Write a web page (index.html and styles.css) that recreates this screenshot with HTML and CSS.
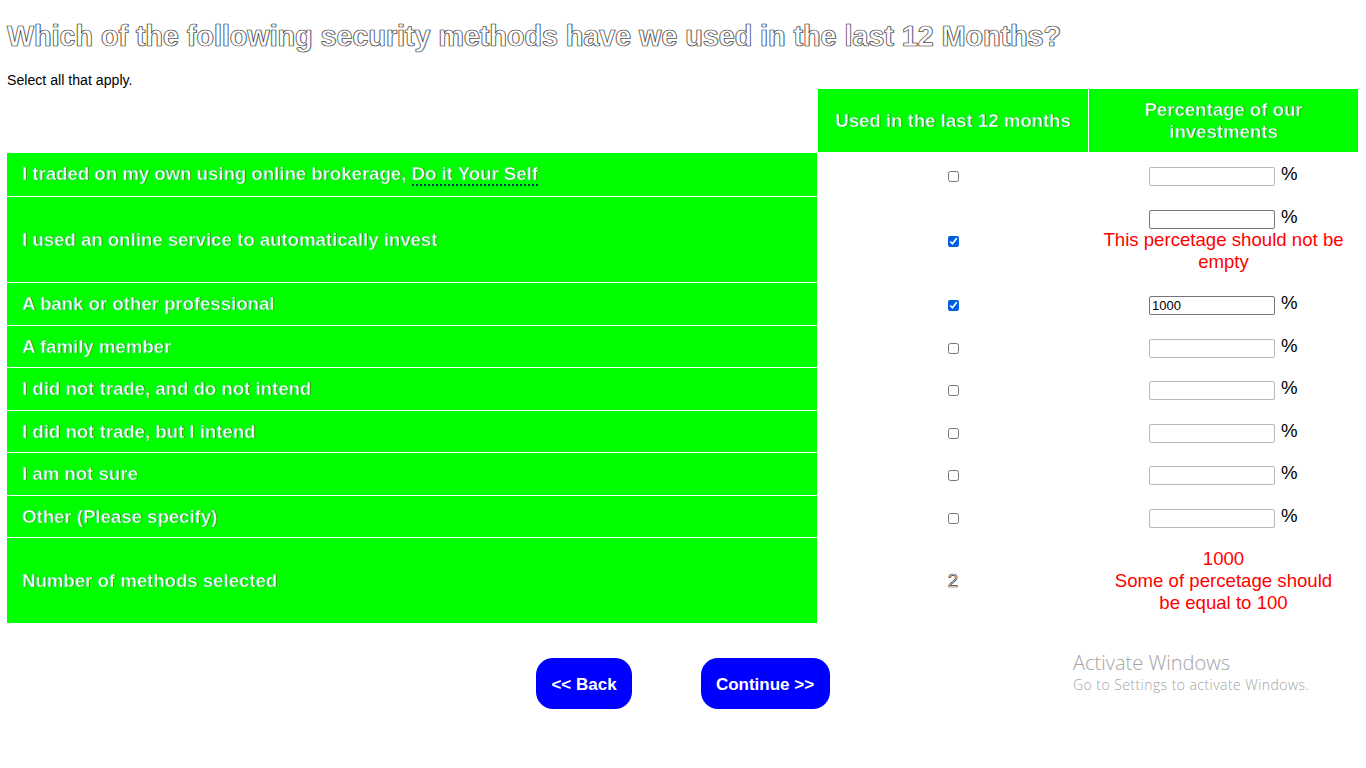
FILE: index.html
```html
<!DOCTYPE html>
<html lang="en">
<head>
<meta charset="utf-8">
<title>Security methods</title>
<link rel="stylesheet" href="styles.css">
</head>
<body>
<h1 class="title">Which of the following security methods have we used in the last 12 Months?</h1>
<p class="hint">Select all that apply.</p>
<div class="survey">
  <div></div>
  <div class="head">Used in the last 12 months</div>
  <div class="head">Percentage of our<br>investments</div>

  <div class="label"><span>I traded on my own using online brokerage, <span class="tip">Do it Your Self</span></span></div>
  <div class="cell"><input class="check" type="checkbox"></div>
  <div class="cell"><div class="amount"><input class="field" type="text" disabled><span class="unit">%</span></div></div>

  <div class="label">I used an online service to automatically invest</div>
  <div class="cell"><input class="check" type="checkbox" checked></div>
  <div class="cell"><div class="amount"><input class="field" type="text"><span class="unit">%</span></div><div class="error">This percetage should not be<br>empty</div></div>

  <div class="label">A bank or other professional</div>
  <div class="cell"><input class="check" type="checkbox" checked></div>
  <div class="cell"><div class="amount"><input class="field" type="text" value="1000"><span class="unit">%</span></div></div>

  <div class="label">A family member</div>
  <div class="cell"><input class="check" type="checkbox"></div>
  <div class="cell"><div class="amount"><input class="field" type="text" disabled><span class="unit">%</span></div></div>

  <div class="label">I did not trade, and do not intend</div>
  <div class="cell"><input class="check" type="checkbox"></div>
  <div class="cell"><div class="amount"><input class="field" type="text" disabled><span class="unit">%</span></div></div>

  <div class="label">I did not trade, but I intend</div>
  <div class="cell"><input class="check" type="checkbox"></div>
  <div class="cell"><div class="amount"><input class="field" type="text" disabled><span class="unit">%</span></div></div>

  <div class="label">I am not sure</div>
  <div class="cell"><input class="check" type="checkbox"></div>
  <div class="cell"><div class="amount"><input class="field" type="text" disabled><span class="unit">%</span></div></div>

  <div class="label">Other (Please specify)</div>
  <div class="cell"><input class="check" type="checkbox"></div>
  <div class="cell"><div class="amount"><input class="field" type="text" disabled><span class="unit">%</span></div></div>

  <div class="label">Number of methods selected</div>
  <div class="cell"><span class="count">2</span></div>
  <div class="cell"><div class="error">1000<br>Some of percetage should<br>be equal to 100</div></div>
</div>
<div class="actions">
  <button class="button back">&lt;&lt; Back</button>
  <button class="button next">Continue &gt;&gt;</button>
</div>
<div class="activation">
  <div class="activation-title">Activate Windows</div>
  <div class="activation-text">Go to Settings to activate Windows.</div>
</div>
</body>
</html>
```
FILE: styles.css
```css
* { box-sizing: border-box; }
body {
  position: relative;
  margin: 0;
  height: 768px;
  overflow: hidden;
  background: #fff;
  color: #000;
  font-family: "Liberation Sans", Arial, sans-serif;
  font-size: 18.64px;
}
.title {
  margin: 0;
  padding: 19px 0 0 7px;
  height: 72px;
  font-size: 28.66px;
  line-height: 34px;
  white-space: nowrap;
  color: #fff;
  -webkit-text-stroke: .5px #222;
  text-shadow: -.6px 0 #c84, .6px 0 #48c;
}
.hint { margin: 0; padding-left: 7px; height: 17px; font-size: 14.15px; line-height: 17px; }
.survey {
  display: grid;
  grid-template-columns: 810px 270px 269px;
  grid-template-rows: 63px 43px 85px 42px 41px 42px 41px 42px 41px 85px;
  gap: 1px;
  margin-left: 7px;
}
.head, .label { background: #0f0; color: #fff; font-size: 18.6px; font-weight: bold; text-shadow: .7px 0 #052; -webkit-text-stroke: .4px #0e2; }
.head { display: flex; align-items: center; justify-content: center; text-align: center; line-height: 22px; }
.label { display: flex; align-items: center; padding-left: 15px; line-height: 22px; }
.label:nth-child(4) { padding-bottom: 2px; }
.tip { border-bottom: 2px dotted #036; }
.cell { display: flex; flex-direction: column; align-items: center; justify-content: center; }
.check { width: 11px; height: 11px; margin: 3px 0 0; accent-color: #005fe0; }
.amount { display: flex; gap: 6px; height: 22px; }
.field { width: 126px; height: 19px; margin-top: 3px; padding: 1px 2px; border: 1px solid #767680; border-radius: 2px; background: #fff; font: 13px "Liberation Sans", Arial, sans-serif; }
.field:disabled { border-color: #b8b8c0; }
.unit { width: 17px; margin-top: -1px; line-height: 22px; }
.error { color: #f00; line-height: 22px; text-align: center; white-space: nowrap; }
.count { color: #fff; -webkit-text-stroke: .7px #333; }
.actions { display: flex; gap: 69px; margin: 35px 0 0 536px; }
.button { height: 51px; padding: 2px 0 0; border: 0; border-radius: 17px; background: #00f; color: #fff; font: bold 17px "Liberation Sans", Arial, sans-serif; }
.back { width: 96px; }
.next { width: 129px; padding-right: 1px; }
.activation { position: absolute; left: 1073px; top: 651px; color: #a4a4a4; font-family: "Open Sans", "Noto Sans", sans-serif; font-weight: 300; white-space: nowrap; }
.activation-title { font-size: 20px; line-height: 23px; }
.activation-text { font-size: 14px; line-height: 21px; letter-spacing: .44px; }
```
